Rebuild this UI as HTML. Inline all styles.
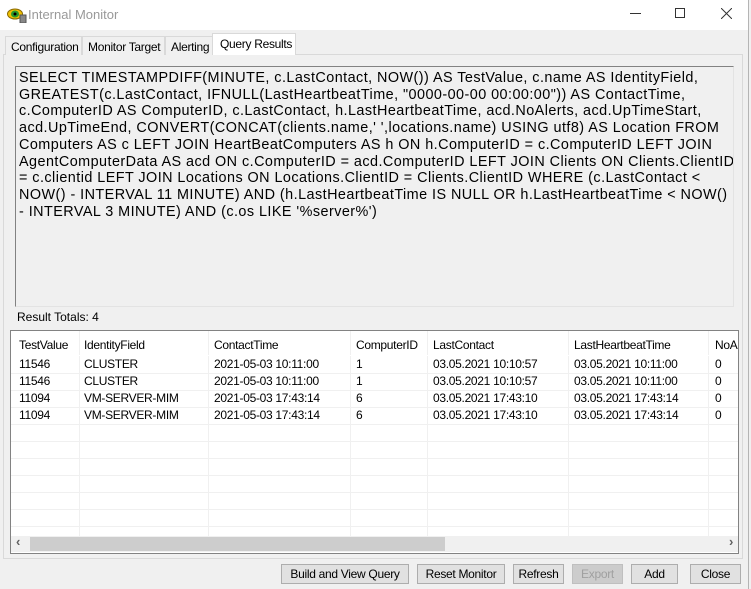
<!DOCTYPE html>
<html><head><meta charset="utf-8"><style>
*{box-sizing:border-box;margin:0;padding:0}
body{width:751px;height:589px;background:#f0f0f0;font-family:"Liberation Sans",Arial,sans-serif;font-size:12px;color:#000;position:relative;overflow:hidden}
.abs{position:absolute}
#title{left:0;top:0;width:748px;height:30px;background:#fff}
#rb{left:748px;top:0;width:3px;height:589px;background:#f0f0f0;border-left:1px solid #b4b4b4}
.tab{position:absolute;top:36px;height:19px;border:1px solid #d9d9d9;border-bottom:none;background:#f0f0f0;padding:3px 0 0 5px;font-size:12px;white-space:nowrap;letter-spacing:-0.3px;overflow:hidden}
#page{left:3px;top:54px;width:740px;height:505px;border:1px solid #d9d9d9;background:#f0f0f0}
#sql{left:15px;top:66px;width:719px;height:241px;border:1px solid #828282;border-right-color:#e3e3e3;border-bottom-color:#e3e3e3;padding:3px 0 0 3px;font-size:14.4px;line-height:16.7px;white-space:nowrap;letter-spacing:0.45px;overflow:hidden}
#grid{left:10px;top:330px;width:729px;height:224px;border:1px solid #828282;background:#fff;overflow:hidden}
.c{position:absolute;white-space:nowrap;font-size:12px;letter-spacing:-0.3px}
.vl{position:absolute;top:0;width:1px;height:205px;background:#f0f0f0}
.hl{position:absolute;left:0;width:729px;height:1px;background:#f0f0f0}
.btn{position:absolute;top:564px;height:20px;border:1px solid #adadad;background:#e1e1e1;text-align:center;line-height:18px;font-size:12px;letter-spacing:-0.3px}
</style></head><body>
<div id="title" class="abs">
<svg class="abs" style="left:7px;top:7px" width="20" height="16"><ellipse cx="8" cy="7" rx="7.5" ry="5" fill="#f0c000" stroke="#8a6a00"/><ellipse cx="8" cy="7" rx="4" ry="3.5" fill="#2a9a2a"/><circle cx="8" cy="7" r="1.5" fill="#000"/><rect x="13" y="8" width="6" height="8" fill="#888" stroke="#555"/></svg>
<div class="abs" style="left:28px;top:7px;font-size:13px;color:#999">Internal Monitor</div>
<div class="abs" style="left:630px;top:13px;width:11px;height:1px;background:#333"></div>
<div class="abs" style="left:675px;top:8px;width:10px;height:10px;border:1px solid #333"></div>
<svg class="abs" style="left:721px;top:8px" width="11" height="11"><path d="M0 0L11 11M11 0L0 11" stroke="#333"/></svg>
</div>
<div id="rb" class="abs"></div>
<div id="page" class="abs"></div>
<div class="tab" style="left:5px;width:77px">Configuration</div>
<div class="tab" style="left:82px;width:83px">Monitor Target</div>
<div class="tab" style="left:165px;width:48px">Alerting</div>
<div class="tab" style="left:212px;top:33px;height:22px;width:84px;background:#fff;padding-left:7px">Query Results</div>
<div id="sql" class="abs">SELECT TIMESTAMPDIFF(MINUTE, c.LastContact, NOW()) AS TestValue, c.name AS IdentityField,<br>GREATEST(c.LastContact, IFNULL(LastHeartbeatTime, "0000-00-00 00:00:00")) AS ContactTime,<br>c.ComputerID AS ComputerID, c.LastContact, h.LastHeartbeatTime, acd.NoAlerts, acd.UpTimeStart,<br>acd.UpTimeEnd, CONVERT(CONCAT(clients.name,' ',locations.name) USING utf8) AS Location FROM<br>Computers AS c LEFT JOIN HeartBeatComputers AS h ON h.ComputerID = c.ComputerID LEFT JOIN<br>AgentComputerData AS acd ON c.ComputerID = acd.ComputerID LEFT JOIN Clients ON Clients.ClientID<br>= c.clientid LEFT JOIN Locations ON Locations.ClientID = Clients.ClientID WHERE (c.LastContact &lt;<br>NOW() - INTERVAL 11 MINUTE) AND (h.LastHeartbeatTime IS NULL OR h.LastHeartbeatTime &lt; NOW()<br>- INTERVAL 3 MINUTE) AND (c.os LIKE '%server%')</div>
<div class="abs" style="left:17px;top:310px;font-size:12px">Result Totals: 4</div>
<div id="grid" class="abs">
<div class="vl" style="left:68px"></div><div class="vl" style="left:197px"></div><div class="vl" style="left:339px"></div><div class="vl" style="left:416px"></div><div class="vl" style="left:557px"></div><div class="vl" style="left:697px"></div>
<div class="hl" style="top:24px;background:#fff"></div>
<div class="hl" style="top:42px"></div><div class="hl" style="top:59px"></div><div class="hl" style="top:76px"></div><div class="hl" style="top:93px"></div><div class="hl" style="top:110px"></div><div class="hl" style="top:127px"></div><div class="hl" style="top:144px"></div><div class="hl" style="top:161px"></div><div class="hl" style="top:178px"></div><div class="hl" style="top:195px"></div>
<div class="c" style="left:8px;top:7px">TestValue</div><div class="c" style="left:73px;top:7px">IdentityField</div><div class="c" style="left:203px;top:7px">ContactTime</div><div class="c" style="left:345px;top:7px">ComputerID</div><div class="c" style="left:422px;top:7px">LastContact</div><div class="c" style="left:563px;top:7px">LastHeartbeatTime</div><div class="c" style="left:704px;top:7px">NoA</div>
<div class="c" style="left:8px;top:25px;line-height:17px">11546<br>11546<br>11094<br>11094</div>
<div class="c" style="left:73px;top:25px;line-height:17px">CLUSTER<br>CLUSTER<br>VM-SERVER-MIM<br>VM-SERVER-MIM</div>
<div class="c" style="left:203px;top:25px;line-height:17px">2021-05-03 10:11:00<br>2021-05-03 10:11:00<br>2021-05-03 17:43:14<br>2021-05-03 17:43:14</div>
<div class="c" style="left:345px;top:25px;line-height:17px">1<br>1<br>6<br>6</div>
<div class="c" style="left:422px;top:25px;line-height:17px">03.05.2021 10:10:57<br>03.05.2021 10:10:57<br>03.05.2021 17:43:10<br>03.05.2021 17:43:10</div>
<div class="c" style="left:563px;top:25px;line-height:17px">03.05.2021 10:11:00<br>03.05.2021 10:11:00<br>03.05.2021 17:43:14<br>03.05.2021 17:43:14</div>
<div class="c" style="left:704px;top:25px;line-height:17px">0<br>0<br>0<br>0</div>
<div class="abs" style="left:0;top:205px;width:727px;height:16px;background:#f0f0f0"></div>
<div class="abs" style="left:19px;top:206px;width:415px;height:14px;background:#cdcdcd"></div>
<div class="abs" style="left:5px;top:203px;font-size:13px;color:#606060;font-weight:bold">‹</div>
<div class="abs" style="left:718px;top:203px;font-size:13px;color:#606060;font-weight:bold">›</div>
</div>
<div class="btn" style="left:281px;width:128px">Build and View Query</div>
<div class="btn" style="left:417px;width:88px">Reset Monitor</div>
<div class="btn" style="left:513px;width:51px">Refresh</div>
<div class="btn" style="left:572px;width:51px;background:#ccc;border-color:#bfbfbf;color:#a0a0a0">Export</div>
<div class="btn" style="left:631px;width:47px">Add</div>
<div class="btn" style="left:690px;width:51px">Close</div>
</body></html>
